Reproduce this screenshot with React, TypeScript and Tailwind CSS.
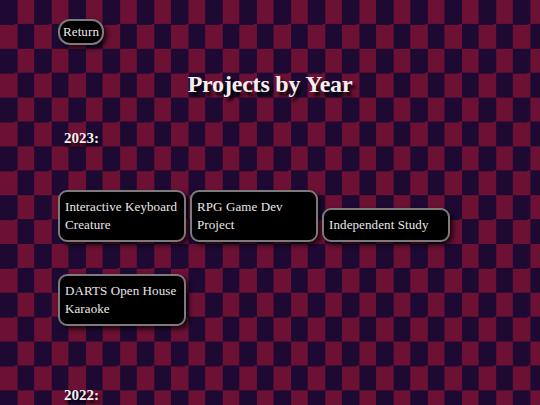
import React from "react";

const projects2023 = [
  "Interactive Keyboard Creature",
  "RPG Game Dev Project",
  "Independent Study",
  "DARTS Open House Karaoke",
];

function Card({ title }: { title: string }) {
  return (
    <div className="w-[128px] rounded-[9px] border-2 border-[#7d7a7c] bg-black pl-[5px] pr-[6px] pt-[6px] pb-[6px] text-[13px] leading-[18px] tracking-[0.1px] text-[#ece8e8] shadow-[3px_3px_5px_rgba(0,0,0,0.75)]">
      {title}
    </div>
  );
}

export default function App() {
  return (
    <div
      className="min-h-screen w-full bg-[#1e0933] bg-[conic-gradient(#6c1034_25%,#1e0933_0_50%,#6c1034_0_75%,#1e0933_0)] bg-size-[34.2px_48.8px] bg-repeat pl-[58px] pt-[19px] pb-[40px]"
      style={{ fontFamily: '"Liberation Serif", "Times New Roman", serif' }}
    >
      <button className="flex h-[26px] items-center rounded-[12px] border-2 border-[#7d7a7c] bg-black px-[3px] text-[13px] leading-[18px] tracking-[0.1px] text-[#ece8e8] shadow-[3px_3px_5px_rgba(0,0,0,0.75)]">
        Return
      </button>

      <h1 className="-ml-[58px] mt-[24px] text-center text-[24px] font-bold leading-[30px] tracking-[-0.2px] text-[#f4f0f0] [text-shadow:3px_4px_3px_#000]">
        Projects by Year
      </h1>

      <h2 className="mt-[29px] pl-[6px] text-[15px] font-bold leading-[20px] text-[#f4f0f0] [text-shadow:2px_3px_3px_#000]">
        2023:
      </h2>

      <div className="mt-[42px] flex flex-wrap items-end gap-x-[4px] gap-y-[32px]">
        {projects2023.map((p) => (
          <Card key={p} title={p} />
        ))}
      </div>

      <h2 className="mt-[59px] pl-[6px] text-[15px] font-bold leading-[20px] text-[#f4f0f0] [text-shadow:2px_3px_3px_#000]">
        2022:
      </h2>
    </div>
  );
}
